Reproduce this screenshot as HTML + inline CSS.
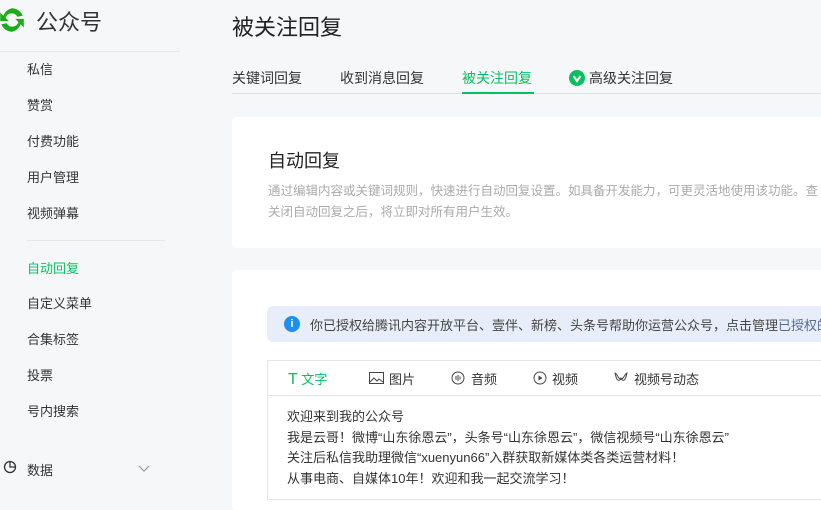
<!DOCTYPE html>
<html><head><meta charset="utf-8"><style>
*{margin:0;padding:0;box-sizing:border-box}
body{width:821px;height:497px;overflow:hidden;background:#f6f7f9;font-family:"Liberation Sans","Noto Sans CJK SC",sans-serif;color:#333;position:relative}
.a{position:absolute;white-space:nowrap}
.m{font-size:13px;color:#333;left:27px}
</style></head><body>
<svg class="a" style="left:-3px;top:5px" width="30" height="30" viewBox="0 0 28 28"><path d="M14 3a11 11 0 0 1 10 7l-5 1a6 6 0 0 0-11 1l3 3H3V7l3 3A11 11 0 0 1 14 3z" fill="#1aad19"/><path d="M14 25a11 11 0 0 1-10-7l5-1a6 6 0 0 0 11-1l-3-3h8v8l-3-3a11 11 0 0 1-8 7z" fill="#1aad19"/></svg>
<div class="a" style="left:36px;top:5px;font-size:22px;color:#333">公众号</div>
<div class="a" style="left:0;top:51px;width:180px;border-top:1px solid #e6e7e9"></div>
<div class="a m" style="top:59px">私信</div>
<div class="a m" style="top:95px">赞赏</div>
<div class="a m" style="top:131px">付费功能</div>
<div class="a m" style="top:167px">用户管理</div>
<div class="a m" style="top:203px">视频弹幕</div>
<div class="a" style="left:27px;top:240px;width:138px;border-top:1px solid #e6e7e9"></div>
<div class="a m" style="top:258px;color:#07c160">自动回复</div>
<div class="a m" style="top:293px">自定义菜单</div>
<div class="a m" style="top:329px">合集标签</div>
<div class="a m" style="top:365px">投票</div>
<div class="a m" style="top:401px">号内搜索</div>
<svg class="a" style="left:3px;top:460px" width="14" height="14" viewBox="0 0 14 14"><circle cx="7" cy="7" r="5.5" fill="none" stroke="#333" stroke-width="1.3"/><path d="M7 1.5V7H12.5" fill="none" stroke="#333" stroke-width="1.3"/></svg>
<div class="a" style="left:27px;top:460px;font-size:13px">数据</div>
<svg class="a" style="left:138px;top:465px" width="12" height="8"><path d="M1 1l5 5 5-5" fill="none" stroke="#999" stroke-width="1.2"/></svg>

<div class="a" style="left:232px;top:10px;font-size:22px;color:#222">被关注回复</div>
<div class="a" style="left:232px;top:68px;font-size:14px">关键词回复</div>
<div class="a" style="left:340px;top:68px;font-size:14px">收到消息回复</div>
<div class="a" style="left:462px;top:68px;font-size:14px;color:#07c160">被关注回复</div>
<svg class="a" style="left:569px;top:70px" width="16" height="16"><circle cx="8" cy="8" r="8" fill="#07c160"/><path d="M4.5 6l3.5 5 3.5-5" fill="none" stroke="#fff" stroke-width="2"/></svg>
<div class="a" style="left:589px;top:68px;font-size:14px">高级关注回复</div>
<div class="a" style="left:232px;top:93px;width:589px;border-top:1px solid #e0e1e3"></div>
<div class="a" style="left:462px;top:92px;width:72px;height:2px;background:#07c160"></div>

<div class="a" style="left:232px;top:117px;width:600px;height:131px;background:#fff;border-radius:4px"></div>
<div class="a" style="left:268px;top:147px;font-size:18px;color:#222">自动回复</div>
<div class="a" style="left:268px;top:181px;font-size:12.5px;color:#aaa;line-height:21px">通过编辑内容或关键词规则，快速进行自动回复设置。如具备开发能力，可更灵活地使用该功能。查<br>关闭自动回复之后，将立即对所有用户生效。</div>

<div class="a" style="left:232px;top:270px;width:600px;height:240px;background:#fff;border-radius:4px"></div>
<div class="a" style="left:267px;top:306px;width:560px;height:36px;background:#e8eef9;border-radius:6px"></div>
<div class="a" style="left:284px;top:316px;width:16px;height:16px;border-radius:50%;background:#1e8ff0;color:#fff;font-size:11px;font-weight:bold;text-align:center;line-height:16px">i</div>
<div class="a" style="left:310px;top:315px;font-size:13px;color:#444">你已授权给腾讯内容开放平台、壹伴、新榜、头条号帮助你运营公众号，点击管理<span style="color:#576b95">已授权的第</span></div>
<div class="a" style="left:267px;top:360px;width:560px;height:140px;border:1px solid #e4e5e7"></div>
<div class="a" style="left:268px;top:395px;width:560px;border-top:1px solid #e4e5e7"></div>
<div class="a" style="left:288px;top:369px;font-size:13px;color:#07c160"><span style="font-size:16px">T</span> 文字</div>
<svg class="a" style="left:369px;top:372px" width="15" height="12"><rect x=".5" y=".5" width="14" height="11" fill="none" stroke="#444"/><path d="M1 10l4-4 3 3 2-2 4 3" fill="none" stroke="#444"/></svg>
<div class="a" style="left:389px;top:369px;font-size:13px">图片</div>
<svg class="a" style="left:451px;top:371px" width="14" height="14"><circle cx="7" cy="7" r="6" fill="none" stroke="#444"/><path d="M5 5v4M7 4v6M9 5.5v3" stroke="#444"/></svg>
<div class="a" style="left:471px;top:369px;font-size:13px">音频</div>
<svg class="a" style="left:533px;top:371px" width="14" height="14"><circle cx="7" cy="7" r="6" fill="none" stroke="#444"/><path d="M5.5 4.5v5l4-2.5z" fill="#444"/></svg>
<div class="a" style="left:552px;top:369px;font-size:13px">视频</div>
<svg class="a" style="left:614px;top:371px" width="14" height="14"><path d="M1 2c2 0 4 8 6 5 2 3 4-5 6-5-1 4-2 10-6 6-4 4-5-2-6-6z" fill="none" stroke="#444"/></svg>
<div class="a" style="left:634px;top:369px;font-size:13px">视频号动态</div>
<div class="a" style="left:287px;top:407px;font-size:13px;line-height:20.5px;color:#333">欢迎来到我的公众号<br>我是云哥！微博“山东徐恩云”，头条号“山东徐恩云”，微信视频号“山东徐恩云”<br>关注后私信我助理微信“xuenyun66”入群获取新媒体类各类运营材料！<br>从事电商、自媒体10年！欢迎和我一起交流学习！</div>
</body></html>
